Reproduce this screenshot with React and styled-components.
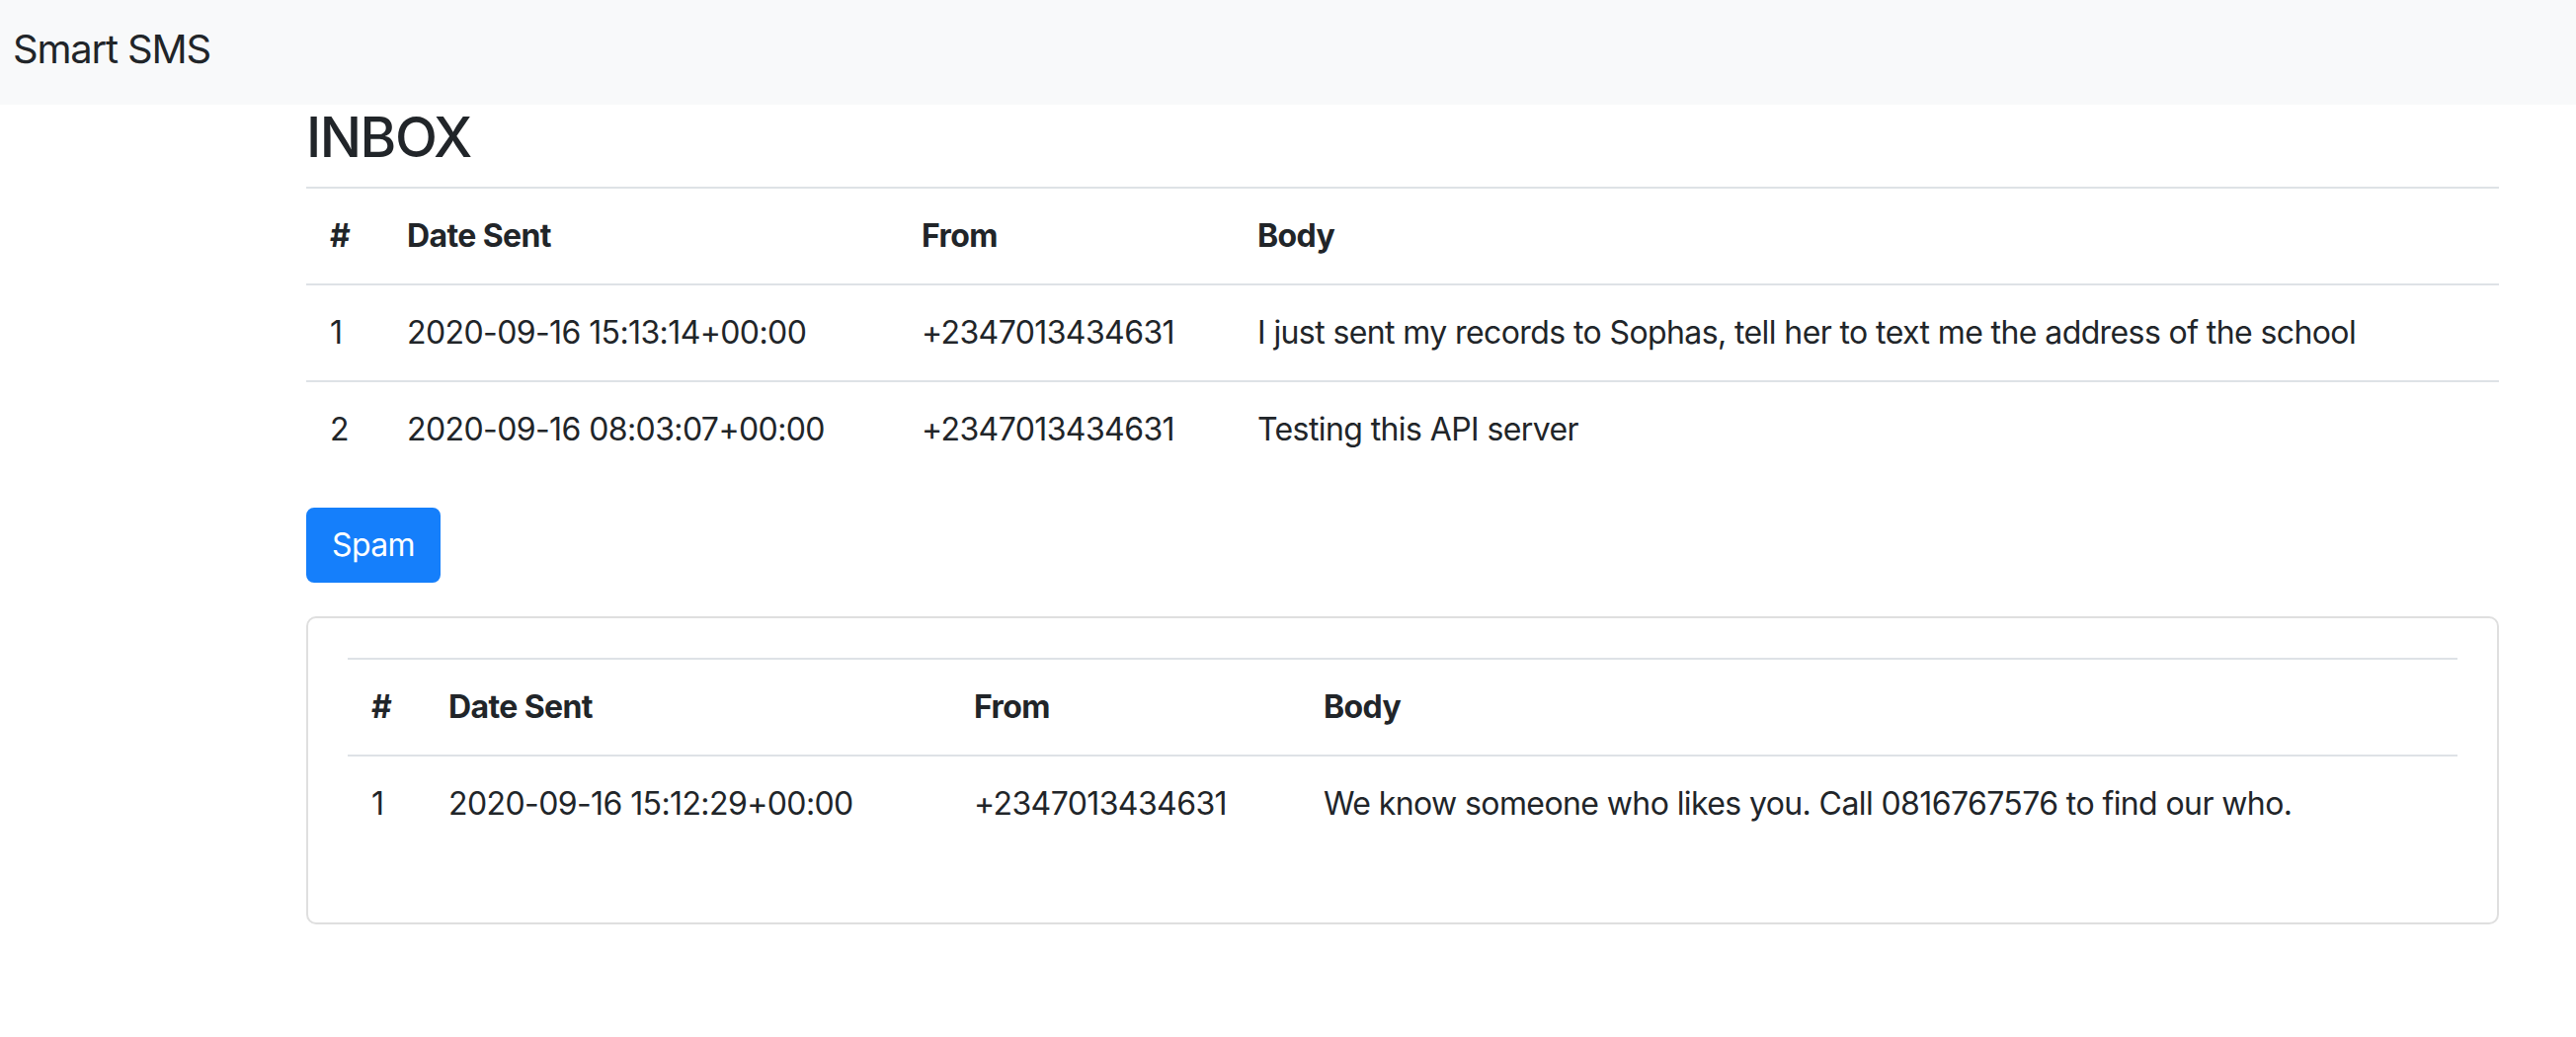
import React from "react";
import styled, { createGlobalStyle } from "styled-components";

const Global = createGlobalStyle`
  html, body { margin: 0; padding: 0; background: #fff; }
  body {
    font-family: Inter, "Noto Sans", "Liberation Sans", sans-serif;
    color: #212529;
    font-size: 32px;
    line-height: 48px;
    letter-spacing: -0.6px;
  }
`;

const NavBar = styled.nav`
  background: #f8f9fa;
  height: 106px;
  box-sizing: border-box;
  padding: 20px 13px 26px;
  display: flex;
  align-items: flex-start;
`;

const Brand = styled.a`
  font-size: 40px;
  line-height: 60px;
  color: #212529;
  text-decoration: none;
  letter-spacing: -1.2px;
`;

const Container = styled.main`
  width: 2220px;
  margin-left: 310px;
`;

const Title = styled.h3`
  margin: 0 0 16px;
  font-size: 56px;
  font-weight: 500;
  line-height: 67px;
  letter-spacing: -1.5px;
`;

const Table = styled.table`
  width: 100%;
  border-collapse: collapse;
  table-layout: fixed;
  margin-bottom: ${(p) => (p.$last ? "32px" : "31px")};
`;

const HeadCell = styled.th`
  text-align: left;
  font-weight: 700;
  padding: 24px;
  border-top: 2px solid #dee2e6;
  vertical-align: top;
  white-space: nowrap;
`;

const Cell = styled.td`
  padding: 24px;
  border-top: 2px solid #dee2e6;
  vertical-align: top;
  white-space: nowrap;
`;

const SpamButton = styled.button`
  display: block;
  font-family: inherit;
  font-size: 32px;
  line-height: 48px;
  letter-spacing: -0.6px;
  color: #fff;
  background: #157ffb;
  border: 2px solid #157ffb;
  border-radius: 8px;
  padding: 12px 24px;
  margin-bottom: 34px;
  cursor: pointer;
`;

const Card = styled.section`
  border: 2px solid #dfdfdf;
  border-radius: 10px;
  padding: 40px;
`;

const inbox = [
  { id: 1, date: "2020-09-16 15:13:14+00:00", from: "+2347013434631", body: "I just sent my records to Sophas, tell her to text me the address of the school" },
  { id: 2, date: "2020-09-16 08:03:07+00:00", from: "+2347013434631", body: "Testing this API server" },
];

const spam = [
  { id: 1, date: "2020-09-16 15:12:29+00:00", from: "+2347013434631", body: "We know someone who likes you. Call 0816767576 to find our who." },
];

function MessageTable({ rows, widths, last }) {
  return (
    <Table $last={last}>
      <colgroup>
        {widths.map((w, i) => (
          <col key={i} style={{ width: w }} />
        ))}
      </colgroup>
      <thead>
        <tr>
          <HeadCell>#</HeadCell>
          <HeadCell>Date Sent</HeadCell>
          <HeadCell>From</HeadCell>
          <HeadCell>Body</HeadCell>
        </tr>
      </thead>
      <tbody>
        {rows.map((r) => (
          <tr key={r.id}>
            <Cell>{r.id}</Cell>
            <Cell>{r.date}</Cell>
            <Cell>{r.from}</Cell>
            <Cell>{r.body}</Cell>
          </tr>
        ))}
      </tbody>
    </Table>
  );
}

export default function App() {
  return (
    <>
      <Global />
      <NavBar>
        <Brand href="#">Smart SMS</Brand>
      </NavBar>
      <Container>
        <Title>INBOX</Title>
        <MessageTable rows={inbox} widths={["78px", "521px", "340px", "auto"]} />
        <SpamButton>Spam</SpamButton>
        <Card>
          <MessageTable rows={spam} widths={["78px", "532px", "354px", "auto"]} last />
        </Card>
      </Container>
    </>
  );
}
